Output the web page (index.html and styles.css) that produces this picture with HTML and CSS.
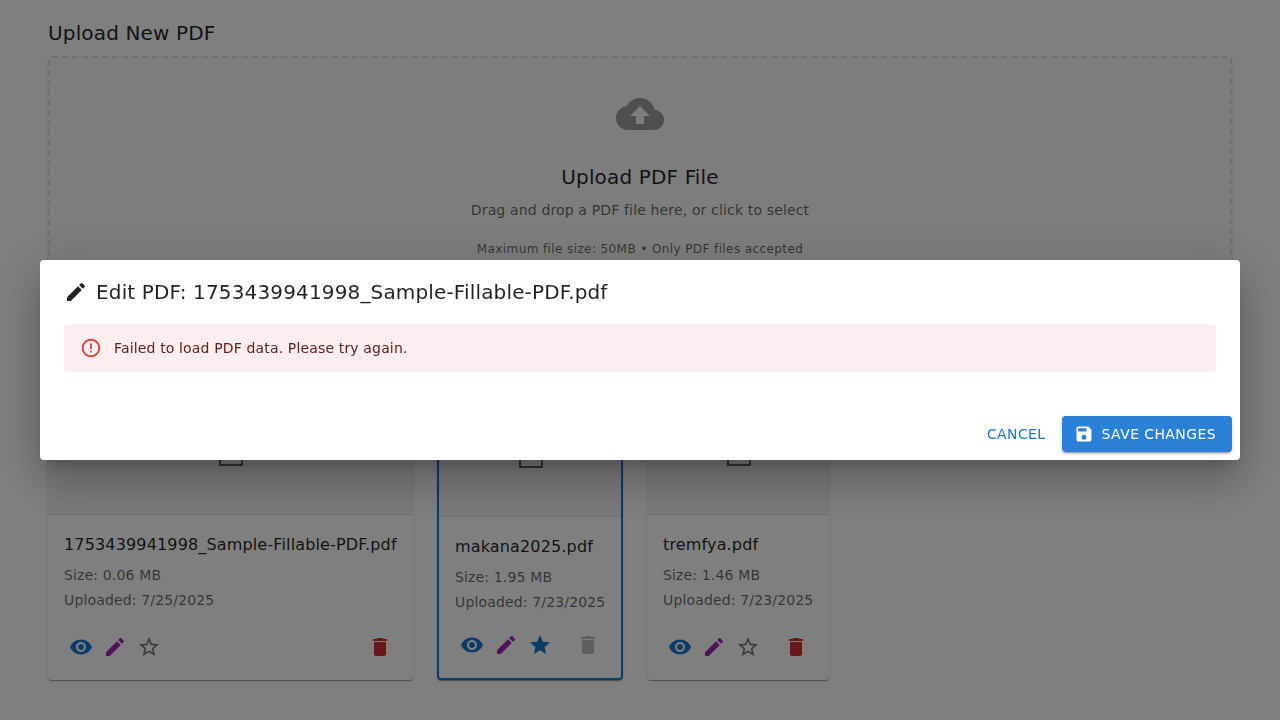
FILE: index.html
```
<!DOCTYPE html>
<html lang="en">
<head>
<meta charset="utf-8">
<title>PDF Library</title>
<link rel="stylesheet" href="styles.css">
</head>
<body>
<svg class="sprite" aria-hidden="true">
  <symbol id="edit" viewBox="0 0 24 24"><path d="M3 17.25V21h3.75L17.81 9.94l-3.75-3.75L3 17.25zM20.71 7.04c.39-.39.39-1.02 0-1.41l-2.34-2.34a.9959.9959 0 0 0-1.41 0l-1.83 1.83 3.75 3.75 1.83-1.83z"/></symbol>
  <symbol id="eye" viewBox="0 0 24 24"><path d="M12 4.5C7 4.5 2.73 7.61 1 12c1.73 4.39 6 7.5 11 7.5s9.27-3.11 11-7.5c-1.73-4.39-6-7.5-11-7.5zM12 17c-2.76 0-5-2.24-5-5s2.24-5 5-5 5 2.24 5 5-2.24 5-5 5zm0-8c-1.66 0-3 1.34-3 3s1.34 3 3 3 3-1.34 3-3-1.34-3-3-3z"/></symbol>
  <symbol id="star" viewBox="0 0 24 24"><path d="M12 17.27 18.18 21l-1.64-7.03L22 9.24l-7.19-.61L12 2 9.19 8.63 2 9.24l5.46 4.73L5.82 21z"/></symbol>
  <symbol id="star-outline" viewBox="0 0 24 24"><path d="m22 9.24-7.19-.62L12 2 9.19 8.63 2 9.24l5.46 4.73L5.82 21 12 17.27 18.18 21l-1.63-7.03L22 9.24zM12 15.4l-3.76 2.27 1-4.28-3.32-2.88 4.38-.38L12 6.1l1.71 4.04 4.38.38-3.32 2.88 1 4.28L12 15.4z"/></symbol>
  <symbol id="trash" viewBox="0 0 24 24"><path d="M6 19c0 1.1.9 2 2 2h8c1.1 0 2-.9 2-2V7H6v12zM19 4h-3.5l-1-1h-5l-1 1H5v2h14V4z"/></symbol>
  <symbol id="cloud" viewBox="0 0 24 24"><path d="M19.35 10.04C18.67 6.59 15.64 4 12 4 9.11 4 6.6 5.64 5.35 8.04 2.34 8.36 0 10.91 0 14c0 3.31 2.69 6 6 6h13c2.76 0 5-2.24 5-5 0-2.64-2.05-4.78-4.65-4.96zM14 13v4h-4v-4H7l5-5 5 5h-3z"/></symbol>
  <symbol id="error" viewBox="0 0 24 24"><path d="M11 15h2v2h-2zm0-8h2v6h-2zm.99-5C6.47 2 2 6.48 2 12s4.47 10 9.99 10C17.52 22 22 17.52 22 12S17.52 2 11.99 2zM12 20c-4.42 0-8-3.58-8-8s3.58-8 8-8 8 3.58 8 8-3.58 8-8 8z"/></symbol>
  <symbol id="save" viewBox="0 0 24 24"><path d="M17 3H5c-1.11 0-2 .9-2 2v14c0 1.1.89 2 2 2h14c1.1 0 2-.9 2-2V7l-4-4zm-5 16c-1.66 0-3-1.34-3-3s1.34-3 3-3 3 1.34 3 3-1.34 3-3 3zm3-10H5V5h10v4z"/></symbol>
</svg>

<main class="page">
  <h2 class="heading">Upload New PDF</h2>
  <section class="dropzone">
    <svg class="cloud"><use href="#cloud"/></svg>
    <h3 class="heading drop-title">Upload PDF File</h3>
    <p class="body-text drop-hint">Drag and drop a PDF file here, or click to select</p>
    <p class="caption">Maximum file size: 50MB • Only PDF files accepted</p>
  </section>

  <section class="cards">
    <article class="card card-wide">
      <div class="preview"><span class="sheet"></span></div>
      <div class="content">
        <h4 class="name">1753439941998_Sample-Fillable-PDF.pdf</h4>
        <p class="body-text">Size: 0.06 MB</p>
        <p class="body-text">Uploaded: 7/25/2025</p>
      </div>
      <div class="actions">
        <span class="icon-btn blue"><svg class="icon"><use href="#eye"/></svg></span>
        <span class="icon-btn purple"><svg class="icon"><use href="#edit"/></svg></span>
        <span class="icon-btn grey"><svg class="icon"><use href="#star-outline"/></svg></span>
        <span class="icon-btn red push"><svg class="icon"><use href="#trash"/></svg></span>
      </div>
    </article>
    <article class="card card-default">
      <div class="preview"><span class="sheet"></span></div>
      <div class="content">
        <h4 class="name">makana2025.pdf</h4>
        <p class="body-text">Size: 1.95 MB</p>
        <p class="body-text">Uploaded: 7/23/2025</p>
      </div>
      <div class="actions">
        <span class="icon-btn blue"><svg class="icon"><use href="#eye"/></svg></span>
        <span class="icon-btn purple"><svg class="icon"><use href="#edit"/></svg></span>
        <span class="icon-btn blue"><svg class="icon"><use href="#star"/></svg></span>
        <span class="icon-btn disabled push"><svg class="icon"><use href="#trash"/></svg></span>
      </div>
    </article>
    <article class="card card-narrow">
      <div class="preview"><span class="sheet"></span></div>
      <div class="content">
        <h4 class="name">tremfya.pdf</h4>
        <p class="body-text">Size: 1.46 MB</p>
        <p class="body-text">Uploaded: 7/23/2025</p>
      </div>
      <div class="actions">
        <span class="icon-btn blue"><svg class="icon"><use href="#eye"/></svg></span>
        <span class="icon-btn purple"><svg class="icon"><use href="#edit"/></svg></span>
        <span class="icon-btn grey"><svg class="icon"><use href="#star-outline"/></svg></span>
        <span class="icon-btn red push"><svg class="icon"><use href="#trash"/></svg></span>
      </div>
    </article>
  </section>
</main>

<div class="backdrop">
  <div class="dialog" role="dialog">
    <h2 class="heading dialog-title"><svg class="icon"><use href="#edit"/></svg>Edit PDF: 1753439941998_Sample-Fillable-PDF.pdf</h2>
    <div class="alert"><svg class="alert-icon"><use href="#error"/></svg><span class="body-text alert-text">Failed to load PDF data. Please try again.</span></div>
    <div class="dialog-actions">
      <button class="btn btn-text">CANCEL</button>
      <button class="btn btn-filled"><svg class="btn-icon"><use href="#save"/></svg>SAVE CHANGES</button>
    </div>
  </div>
</div>
</body>
</html>
```
FILE: styles.css
```
* { box-sizing: border-box; }
html, body { height: 100%; overflow: hidden; }
body {
  margin: 0;
  background: #fff;
  color: rgba(0, 0, 0, .87);
  font-family: "DejaVu Sans", sans-serif;
}
h2, h3, h4, p { margin: 0; font-weight: 400; }
.sprite { display: none; }
svg { display: block; fill: currentColor; flex-shrink: 0; }
.icon { width: 24px; height: 24px; }

.page { padding: 17px 48px 0; }
.heading { font-size: 20px; line-height: 32px; letter-spacing: .0075em; }
.body-text { font-size: 14px; line-height: 20px; letter-spacing: .01071em; color: rgba(0, 0, 0, .6); }
.caption { margin-top: 19px; font-size: 12px; line-height: 20px; letter-spacing: .03333em; color: rgba(0, 0, 0, .6); }

.dropzone {
  display: flex;
  flex-direction: column;
  align-items: center;
  height: 227px;
  margin-top: 7px;
  padding-top: 32px;
  border: 2px dashed #e0e0e0;
  border-radius: 4px;
  background: #fafafa;
  box-shadow: 0 2px 1px -1px rgba(0, 0, 0, .2), 0 1px 1px rgba(0, 0, 0, .14), 0 1px 3px rgba(0, 0, 0, .12);
}
.cloud { width: 48px; height: 48px; color: #9e9e9e; }
.drop-title { margin-top: 23px; }
.drop-hint { margin-top: 7px; }

.cards { display: flex; gap: 24px; height: 365px; margin-top: 32px; }
.card {
  display: flex;
  flex-direction: column;
  border-radius: 4px;
  background: #fff;
  overflow: hidden;
  box-shadow: 0 2px 1px -1px rgba(0, 0, 0, .2), 0 1px 1px rgba(0, 0, 0, .14), 0 1px 3px rgba(0, 0, 0, .12);
}
.card-wide { width: 365px; }
.card-default { width: 186px; border: 2px solid #1976d2; }
.card-narrow { width: 182px; }
.preview {
  display: flex;
  align-items: flex-end;
  justify-content: center;
  height: 200px;
  padding-bottom: 48px;
  border-bottom: 1px solid #e0e0e0;
  background: #f5f5f5;
}
.sheet { width: 24px; height: 36px; border: 2px solid rgba(0, 0, 0, .6); }
.card-default .preview, .card-narrow .preview { padding-left: 1px; }
.content { padding: 16px 16px 0; }
.name { margin-bottom: 6px; font-size: 16px; line-height: 28px; letter-spacing: .00938em; white-space: nowrap; }
.content .body-text { margin-bottom: 5px; white-space: nowrap; }
.actions { display: flex; margin-top: auto; padding: 0 16px 16px; }
.icon-btn { padding: 5px; }
.push { margin-left: auto; }
.blue { color: #1976d2; }
.purple { color: #9c27b0; }
.grey { color: rgba(0, 0, 0, .54); }
.red { color: #d32f2f; }
.disabled { color: rgba(0, 0, 0, .26); }

.backdrop {
  position: fixed;
  inset: 0;
  display: flex;
  align-items: center;
  justify-content: center;
  background: rgba(0, 0, 0, .5);
}
.dialog {
  width: 1200px;
  height: 200px;
  border-radius: 4px;
  background: #fff;
  box-shadow: 0 11px 15px -7px rgba(0, 0, 0, .2), 0 24px 38px 3px rgba(0, 0, 0, .14), 0 9px 46px 8px rgba(0, 0, 0, .12);
}
.dialog-title { display: flex; align-items: center; gap: 8px; padding: 16px 24px; }
.alert {
  display: flex;
  align-items: center;
  gap: 12px;
  height: 48px;
  margin: 0 24px 36px;
  padding: 0 16px;
  border-radius: 4px;
  background: #fdeded;
}
.alert-icon { width: 22px; height: 22px; color: #d74242; }
.alert-text { color: #5f2120; }
.dialog-actions { display: flex; justify-content: flex-end; gap: 8px; padding: 8px; }
.btn {
  display: flex;
  align-items: center;
  height: 36px;
  padding: 0 8px;
  border: 0;
  border-radius: 4px;
  background: none;
  color: #1976d2;
  font: 14px/24px "DejaVu Sans", sans-serif;
  letter-spacing: .02857em;
}
.btn-filled {
  gap: 8px;
  padding: 0 16px 0 12px;
  background: #2a7fd6;
  color: #fff;
  box-shadow: 0 3px 1px -2px rgba(0, 0, 0, .2), 0 2px 2px rgba(0, 0, 0, .14), 0 1px 5px rgba(0, 0, 0, .12);
}
.btn-icon { width: 20px; height: 20px; }
```
